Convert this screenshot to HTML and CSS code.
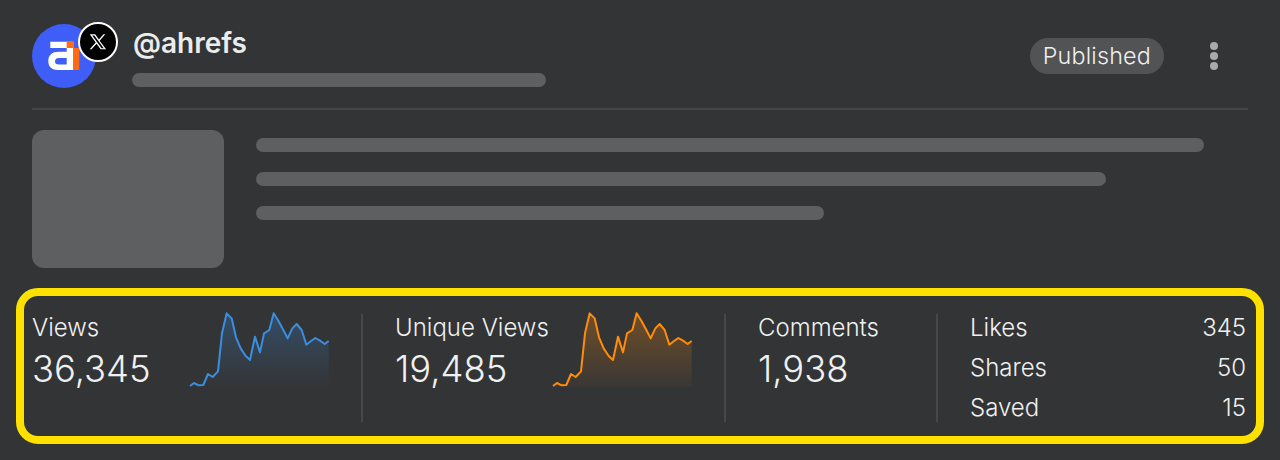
FILE: index.html
```html
<!DOCTYPE html>
<html lang="en">
<head>
<meta charset="utf-8">
<title>Post card</title>
<link rel="stylesheet" href="styles.css">
</head>
<body>
<main class="card">
  <header class="head">
    <div class="avatar-wrap">
      <svg class="avatar" viewBox="0 0 64 64" width="64" height="64">
        <circle cx="32" cy="32" r="32" fill="#3f5ef8"/>
        <path fill="#fff" d="M18.300 17.700H41.300V46H26C20 46 16.300 43 16.300 37 16.300 31 20 27.700 27 27.700H34.700V24H18.300zM34.700 34H27C24.500 34 23 35 23 37.500 23 39.500 24 40.500 27 40.500H34.700z"/>
        <path fill="#ff6a13" d="M34.700 17.700H41.300V24H34.700zM41.300 24H47.300V46H41.300z"/>
      </svg>
      <span class="x-badge">
        <svg viewBox="0 0 24 24" width="22" height="22"><path fill="#fff" d="M3 3.500h5.900l4.100 5.700 5-5.700h1.900l-6.100 7 7 9.500h-5.900l-4.500-6.200-5.500 6.200H3l6.500-7.400zm2.700 1.300 10.200 13.900h2.300L8 4.800z"/></svg>
      </span>
    </div>
    <div class="identity">
      <div class="handle">@ahrefs</div>
      <div class="bar bar-sub"></div>
    </div>
    <span class="pill">Published</span>
    <div class="dots"><i></i><i></i><i></i></div>
  </header>

  <section class="content">
    <div class="thumb"></div>
    <div class="lines">
      <div class="bar bar-1"></div>
      <div class="bar bar-2"></div>
      <div class="bar bar-3"></div>
    </div>
  </section>

  <section class="stats">
    <div class="stat stat-views">
      <div class="stat-text">
        <div class="label">Views</div>
        <div class="value">36,345</div>
      </div>
      <svg class="spark" viewBox="0 0 480 300" width="160" height="100">
        <defs><linearGradient id="gb" x1="0" y1="0" x2="0" y2="1"><stop offset="0" stop-color="#3b8fe0" stop-opacity=".28"/><stop offset="1" stop-color="#3b8fe0" stop-opacity="0"/></linearGradient></defs>
        <path fill="url(#gb)" d="M30 258 42 249 56 256 70 255 84 222 98 231 114 214 126 100 140 40 155 55 168 112 182 145 197 168 210 180 225 110 240 157 252 100 268 90 281 40 295 62 310 90 323 115 337 85 350 72 365 90 379 134 393 123 406 114 420 122 434 132 446 123V262H30z"/>
        <polyline fill="none" stroke="#3a8ee0" stroke-width="6" stroke-linejoin="round" points="30,258 42,249 56,256 70,255 84,222 98,231 114,214 126,100 140,40 155,55 168,112 182,145 197,168 210,180 225,110 240,157 252,100 268,90 281,40 295,62 310,90 323,115 337,85 350,72 365,90 379,134 393,123 406,114 420,122 434,132 446,123"/>
      </svg>
    </div>
    <div class="stat stat-unique">
      <div class="stat-text">
        <div class="label">Unique Views</div>
        <div class="value">19,485</div>
      </div>
      <svg class="spark" viewBox="0 0 480 300" width="160" height="100">
        <defs><linearGradient id="go" x1="0" y1="0" x2="0" y2="1"><stop offset="0" stop-color="#ff8c0a" stop-opacity=".3"/><stop offset="1" stop-color="#ff8c0a" stop-opacity=".03"/></linearGradient></defs>
        <path fill="url(#go)" d="M30 258 42 249 56 256 70 255 84 222 98 231 114 214 126 100 140 40 155 55 168 112 182 145 197 168 210 180 225 110 240 157 252 100 268 90 281 40 295 62 310 90 323 115 337 85 350 72 365 90 379 134 393 123 406 114 420 122 434 132 446 123V262H30z"/>
        <polyline fill="none" stroke="#ff8c0a" stroke-width="6" stroke-linejoin="round" points="30,258 42,249 56,256 70,255 84,222 98,231 114,214 126,100 140,40 155,55 168,112 182,145 197,168 210,180 225,110 240,157 252,100 268,90 281,40 295,62 310,90 323,115 337,85 350,72 365,90 379,134 393,123 406,114 420,122 434,132 446,123"/>
      </svg>
    </div>
    <div class="stat stat-comments">
      <div class="stat-text">
        <div class="label">Comments</div>
        <div class="value">1,938</div>
      </div>
    </div>
    <div class="stat stat-list">
      <div class="row"><span>Likes</span><span>345</span></div>
      <div class="row"><span>Shares</span><span>50</span></div>
      <div class="row"><span>Saved</span><span>15</span></div>
    </div>
  </section>
</main>
</body>
</html>
```
FILE: styles.css
```css
* { box-sizing: border-box; }
html, body { margin: 0; height: 100%; }
body {
  background: #333436;
  font-family: Inter, "Liberation Sans", sans-serif;
  color: #eceded;
  overflow: hidden;
}
.card {
  display: flex;
  flex-direction: column;
  padding: 24px 16px 0;
}
.head {
  display: flex;
  align-items: flex-start;
  margin: 0 16px;
  height: 86px;
  border-bottom: 2px solid #444548;
}
.avatar-wrap {
  position: relative;
  width: 64px;
  height: 64px;
  margin-right: 36px;
  flex: none;
}
.avatar { display: block; }
.x-badge {
  position: absolute;
  left: 46px;
  top: -2px;
  width: 40px;
  height: 40px;
  border-radius: 50%;
  background: #000;
  border: 2px solid #fff;
  display: flex;
  align-items: center;
  justify-content: center;
}
.identity {
  flex: none;
  width: 414px;
  display: flex;
  flex-direction: column;
}
.handle {
  font-size: 28px;
  font-weight: 600;
  line-height: 38px;
  height: 49px;
  margin-left: 1px;
  color: #ebecec;
}
.bar {
  height: 14px;
  border-radius: 7px;
  background: #5e5f60;
}
.bar-sub { width: 414px; }
.pill {
  margin: 14px 0 0 auto;
  height: 36px;
  padding: 0 13px 0 12.500px;
  border-radius: 18px;
  background: #525355;
  font-size: 23.300px;
  font-weight: 300;
  line-height: 36px;
  letter-spacing: .2px;
  color: #eff0f0;
}
.dots {
  width: 8px;
  margin: 18px 30px 0 46px;
  display: flex;
  flex-direction: column;
  gap: 2px;
}
.dots i {
  display: block;
  width: 8px;
  height: 8px;
  border-radius: 50%;
  background: #a9aaaa;
}
.content {
  display: flex;
  gap: 32px;
  margin: 20px 16px 0;
}
.thumb {
  width: 192px;
  height: 138px;
  border-radius: 12px;
  background: #5e5f60;
  flex: none;
}
.lines {
  flex: 1;
  display: flex;
  flex-direction: column;
  gap: 20px;
  padding-top: 8px;
}
.bar-1 { width: 948px; }
.bar-2 { width: 850px; }
.bar-3 { width: 568px; }
.stats {
  display: flex;
  margin-top: 20px;
  height: 156px;
  border: 8px solid #ffe100;
  border-radius: 22px;
  padding: 18px 8px 14px 8px;
}
.stat {
  display: flex;
  height: 108px;
  border-right: 2px solid #47484b;
  flex: none;
}
.stat-views { width: 331px; }
.stat-unique { margin-left: 32px; width: 331px; }
.stat-comments { margin-left: 32px; width: 180px; }
.stat-text {
  display: flex;
  flex-direction: column;
}
.label {
  font-size: 24px;
  font-weight: 300;
  line-height: 28px;
  white-space: nowrap;
  color: #eff0f0;
}
.value {
  font-size: 36.400px;
  font-weight: 300;
  line-height: 44px;
  margin-top: 5px;
  color: #eff0f0;
}
.spark {
  flex: none;
  margin-top: -14px;
}
.stat-views .stat-text { width: 148px; }
.stat-unique .stat-text { width: 148px; }
.stat-list {
  flex: 1;
  margin-left: 32px;
  border-right: 0;
  flex-direction: column;
  justify-content: flex-start;
  padding-right: 2px;
}
.row {
  display: flex;
  justify-content: space-between;
  font-size: 24px;
  font-weight: 300;
  line-height: 28px;
  margin: 0 0 12px;
  color: #eff0f0;
}
```
